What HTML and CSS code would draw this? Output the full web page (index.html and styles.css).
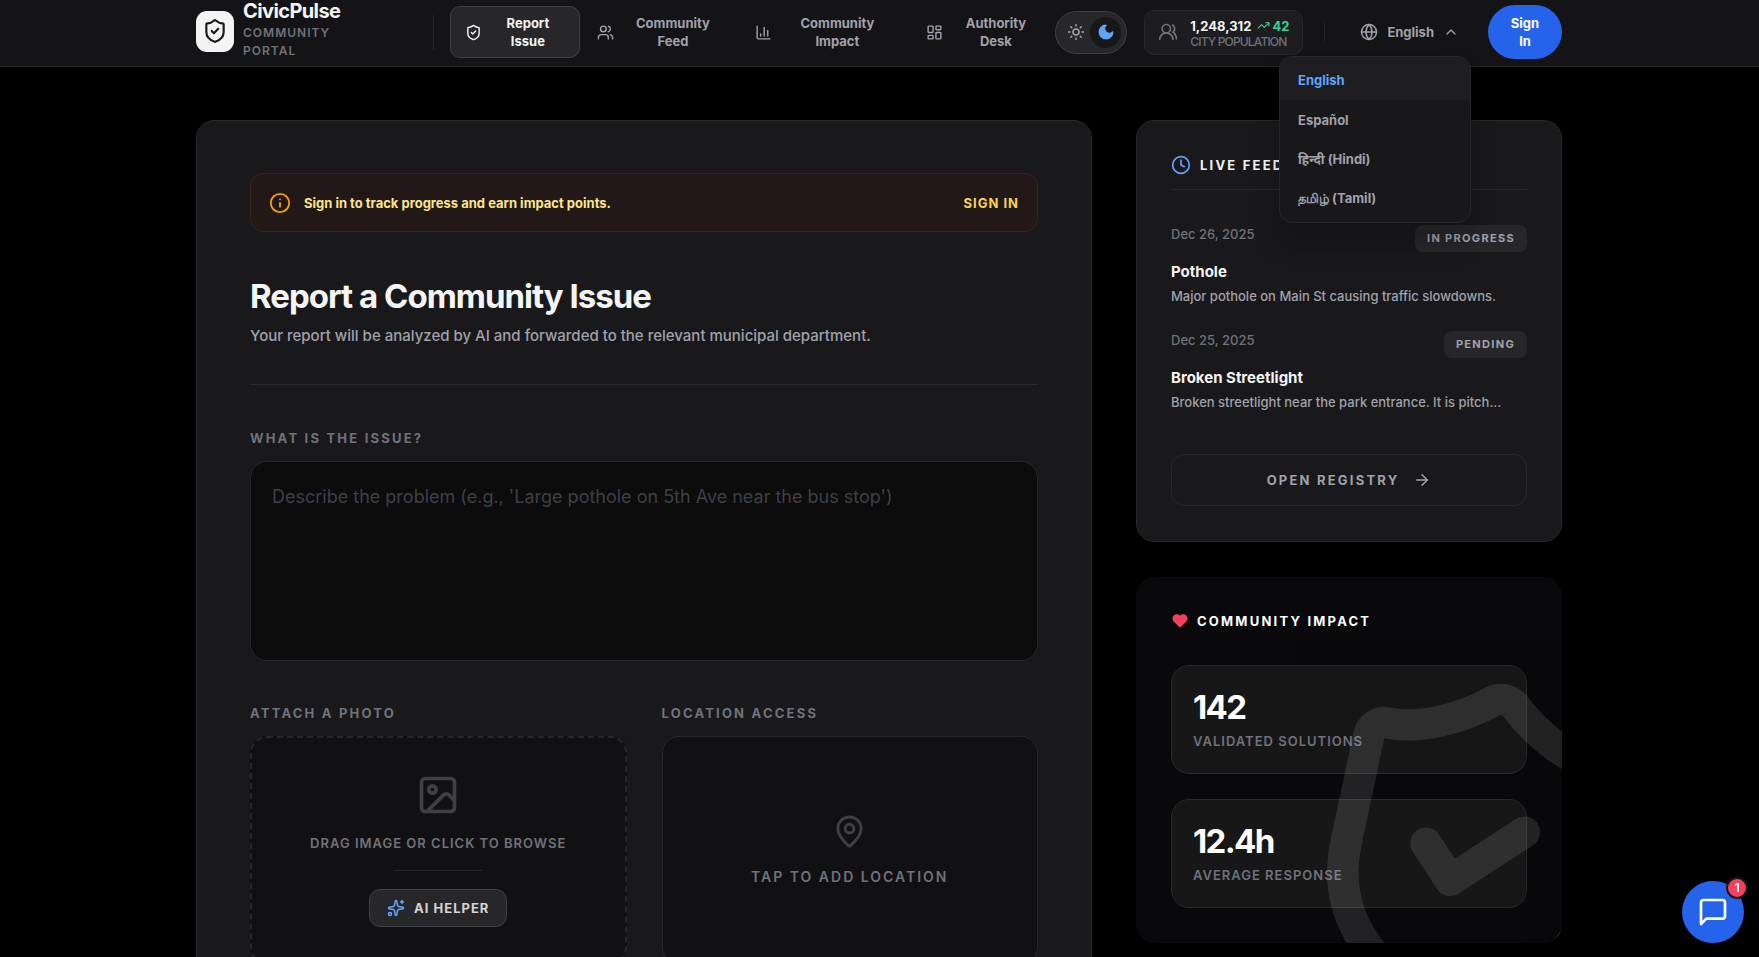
FILE: index.html
```html
<!DOCTYPE html>
<html lang="en">
  <head>
    <meta charset="UTF-8" />
    <meta name="viewport" content="width=device-width, initial-scale=1.0" />
    <title>CivicPulse - Community Portal</title>
    <link rel="stylesheet" href="styles.css">
  </head>
  <body>
    <header class="header">
      <div class="container header-row">
        <a href="#" class="brand">
          <span class="brand-mark">
            <svg class="icon" width="26" height="26" viewBox="0 0 24 24"><path d="M20 13c0 5-3.5 7.5-7.66 8.95a1 1 0 0 1-.67-.01C7.5 20.5 4 18 4 13V6a1 1 0 0 1 1-1c2 0 4.5-1.2 6.24-2.72a1.17 1.17 0 0 1 1.52 0C14.51 3.81 17 5 19 5a1 1 0 0 1 1 1z"/><path d="m9 12 2 2 4-4"/></svg>
          </span>
          <span class="brand-text">
            <span class="brand-name">CivicPulse</span>
            <span class="brand-sub">Community Portal</span>
          </span>
        </a>
        <span class="divider divider-tall"></span>

        <nav class="nav">
          <button type="button" class="nav-item active">
            <svg class="icon" width="17" height="17" viewBox="0 0 24 24"><path d="M20 13c0 5-3.5 7.5-7.66 8.95a1 1 0 0 1-.67-.01C7.5 20.5 4 18 4 13V6a1 1 0 0 1 1-1c2 0 4.5-1.2 6.24-2.72a1.17 1.17 0 0 1 1.52 0C14.51 3.81 17 5 19 5a1 1 0 0 1 1 1z"/><path d="m9 12 2 2 4-4"/></svg>
            <span>Report Issue</span>
          </button>
          <button type="button" class="nav-item">
            <svg class="icon" width="17" height="17" viewBox="0 0 24 24"><path d="M16 21v-2a4 4 0 0 0-4-4H6a4 4 0 0 0-4 4v2"/><circle cx="9" cy="7" r="4"/><path d="M22 21v-2a4 4 0 0 0-3-3.87"/><path d="M16 3.13a4 4 0 0 1 0 7.75"/></svg>
            <span>Community Feed</span>
          </button>
          <button type="button" class="nav-item">
            <svg class="icon" width="17" height="17" viewBox="0 0 24 24"><path d="M3 3v16a2 2 0 0 0 2 2h16"/><path d="M18 17V9"/><path d="M13 17V5"/><path d="M8 17v-3"/></svg>
            <span>Community Impact</span>
          </button>
          <button type="button" class="nav-item">
            <svg class="icon" width="17" height="17" viewBox="0 0 24 24"><rect width="7" height="9" x="3" y="3" rx="1"/><rect width="7" height="5" x="14" y="3" rx="1"/><rect width="7" height="9" x="14" y="12" rx="1"/><rect width="7" height="5" x="3" y="16" rx="1"/></svg>
            <span>Authority Desk</span>
          </button>
        </nav>

        <div class="actions">
          <button type="button" class="theme-toggle" aria-label="Toggle theme">
            <svg class="icon" width="18" height="18" viewBox="0 0 24 24"><circle cx="12" cy="12" r="4"/><path d="M12 2v2"/><path d="M12 20v2"/><path d="m4.93 4.93 1.41 1.41"/><path d="m17.66 17.66 1.41 1.41"/><path d="M2 12h2"/><path d="M20 12h2"/><path d="m6.34 17.66-1.41 1.41"/><path d="m19.07 4.93-1.41 1.41"/></svg>
            <span class="theme-knob">
              <svg class="icon moon" width="18" height="18" viewBox="0 0 24 24"><path d="M12 3a6 6 0 0 0 9 9 9 9 0 1 1-9-9Z"/></svg>
            </span>
          </button>

          <div class="population">
            <svg class="icon" width="20" height="20" viewBox="0 0 24 24"><path d="M18 21a8 8 0 0 0-16 0"/><circle cx="10" cy="8" r="5"/><path d="M22 20c0-3.37-2-6.5-4-8a5 5 0 0 0-.45-8.3"/></svg>
            <div>
              <div class="population-row">
                <span class="population-count">1,248,312</span>
                <span class="population-trend">
                  <svg class="icon" width="13" height="13" viewBox="0 0 24 24"><path d="m22 7-8.5 8.5-5-5L2 17"/><path d="M16 7h6v6"/></svg>42</span>
              </div>
              <div class="population-label">City Population</div>
            </div>
          </div>

          <span class="divider divider-short"></span>

          <div class="language">
            <button type="button" class="language-btn" aria-haspopup="true" aria-expanded="true">
              <svg class="icon" width="18" height="18" viewBox="0 0 24 24"><circle cx="12" cy="12" r="10"/><path d="M12 2a14.5 14.5 0 0 0 0 20 14.5 14.5 0 0 0 0-20"/><path d="M2 12h20"/></svg>
              English
              <svg class="icon" width="16" height="16" viewBox="0 0 24 24"><path d="m18 15-6-6-6 6"/></svg>
            </button>
            <div class="language-menu">
              <button type="button" class="language-option selected">English</button>
              <button type="button" class="language-option" lang="es">Español</button>
              <button type="button" class="language-option">हिन्दी (Hindi)</button>
              <button type="button" class="language-option">தமிழ் (Tamil)</button>
            </div>
          </div>

          <button type="button" class="sign-in">Sign In</button>
        </div>
      </div>
    </header>

    <main class="container layout">
      <form class="card report">
        <div class="alert">
          <svg class="icon" width="22" height="22" viewBox="0 0 24 24"><circle cx="12" cy="12" r="10"/><path d="M12 16v-4"/><path d="M12 8h.01"/></svg>
          <p>Sign in to track progress and earn impact points.</p>
          <a href="#">Sign In</a>
        </div>

        <div class="report-head">
          <h1>Report a Community Issue</h1>
          <p>Your report will be analyzed by AI and forwarded to the relevant municipal department.</p>
        </div>

        <div class="field">
          <label for="issue" class="label">What is the issue?</label>
          <textarea id="issue" class="textarea" placeholder="Describe the problem (e.g., 'Large pothole on 5th Ave near the bus stop')"></textarea>
        </div>

        <div class="field-row">
          <div class="field">
            <span class="label">Attach a photo</span>
            <div class="dropzone">
              <svg class="icon" width="44" height="44" viewBox="0 0 24 24"><rect width="18" height="18" x="3" y="3" rx="2"/><circle cx="9" cy="9" r="2"/><path d="m21 15-3.09-3.09a2 2 0 0 0-2.82 0L6 21"/></svg>
              <span class="dropzone-text">Drag image or click to browse</span>
              <span class="dropzone-line"></span>
              <button type="button" class="ai-helper">
                <svg class="icon" width="18" height="18" viewBox="0 0 24 24"><path d="M11.02 2.81a1 1 0 0 1 1.97 0l1.05 5.56a2 2 0 0 0 1.59 1.59l5.56 1.05a1 1 0 0 1 0 1.97l-5.56 1.05a2 2 0 0 0-1.59 1.59l-1.05 5.56a1 1 0 0 1-1.97 0l-1.05-5.56a2 2 0 0 0-1.59-1.59l-5.56-1.05a1 1 0 0 1 0-1.97l5.56-1.05a2 2 0 0 0 1.59-1.59z"/><path d="M20 2v4"/><path d="M22 4h-4"/><circle cx="4" cy="20" r="2"/></svg>
                AI Helper
              </button>
            </div>
          </div>
          <div class="field">
            <span class="label">Location access</span>
            <button type="button" class="location">
              <svg class="icon" width="35" height="35" viewBox="0 0 24 24"><path d="M20 10c0 4.99-5.54 10.19-7.4 11.8a1 1 0 0 1-1.2 0C9.54 20.19 4 14.99 4 10a8 8 0 0 1 16 0"/><circle cx="12" cy="10" r="3"/></svg>
              Tap to add location
            </button>
          </div>
        </div>
      </form>

      <aside class="sidebar">
        <section class="card feed">
          <h2 class="feed-title">
            <svg class="icon" width="20" height="20" viewBox="0 0 24 24"><circle cx="12" cy="12" r="10"/><path d="M12 6v6l4 2"/></svg>
            Live Feed
          </h2>
          <article class="feed-item">
            <div class="feed-meta">
              <time datetime="2025-12-26">Dec 26, 2025</time>
              <span class="status">In Progress</span>
            </div>
            <h3>Pothole</h3>
            <p>Major pothole on Main St causing traffic slowdowns.</p>
          </article>
          <article class="feed-item">
            <div class="feed-meta">
              <time datetime="2025-12-25">Dec 25, 2025</time>
              <span class="status">Pending</span>
            </div>
            <h3>Broken Streetlight</h3>
            <p>Broken streetlight near the park entrance. It is pitch...</p>
          </article>
          <button type="button" class="registry">
            Open Registry
            <svg class="icon" width="18" height="18" viewBox="0 0 24 24"><path d="M5 12h14"/><path d="m12 5 7 7-7 7"/></svg>
          </button>
        </section>

        <section class="impact">
          <h2 class="impact-title">
            <svg class="heart" width="18" height="18" viewBox="0 0 24 24"><path d="M19 14c1.49-1.46 3-3.21 3-5.5A5.5 5.5 0 0 0 16.5 3c-1.76 0-3 .5-4.5 2-1.5-1.5-2.74-2-4.5-2A5.5 5.5 0 0 0 2 8.5c0 2.3 1.5 4.05 3 5.5l7 7Z"/></svg>
            Community Impact
          </h2>
          <div class="stat">
            <div class="stat-value">142</div>
            <div class="stat-label">Validated Solutions</div>
          </div>
          <div class="stat">
            <div class="stat-value">12.4h</div>
            <div class="stat-label">Average Response</div>
          </div>
          <svg class="icon watermark" width="376" height="376" viewBox="0 0 24 24"><path d="M20 13c0 5-3.5 7.5-7.66 8.95a1 1 0 0 1-.67-.01C7.5 20.5 4 18 4 13V6a1 1 0 0 1 1-1c2 0 4.5-1.2 6.24-2.72a1.17 1.17 0 0 1 1.52 0C14.51 3.81 17 5 19 5a1 1 0 0 1 1 1z"/><path d="m9 12 2 2 4-4"/></svg>
        </section>
      </aside>
    </main>

    <button type="button" class="chat" aria-label="Open chat">
      <svg class="icon" width="32" height="32" viewBox="0 0 24 24"><path d="M21 15a2 2 0 0 1-2 2H7l-4 4V5a2 2 0 0 1 2-2h14a2 2 0 0 1 2 2z"/></svg>
      <span class="chat-badge">1</span>
    </button>
  </body>
</html>
```

FILE: styles.css
```css
*,
*::after,
*::before {
  margin: 0;
  padding: 0;
  box-sizing: border-box;
}

html {
  font-family: "Inter", "Noto Sans", sans-serif;
  scrollbar-width: none;
}

body {
  background: #000;
  color: #f4f4f5;
  font-size: 13px;
  line-height: 18px;
}

button {
  font: inherit;
  color: inherit;
  background: none;
  border: 0;
  cursor: pointer;
}

a {
  color: inherit;
  text-decoration: none;
}

.icon {
  flex-shrink: 0;
  fill: none;
  stroke: currentColor;
  stroke-width: 2;
  stroke-linecap: round;
  stroke-linejoin: round;
}

.container {
  max-width: 1409px;
  margin: 0 auto;
  padding: 0 22px 0 21px;
}

/* Header */
.header {
  position: sticky;
  top: 0;
  z-index: 10;
  background: #141416;
  border-bottom: 1px solid #27272a;
}

.header-row {
  display: flex;
  align-items: center;
  padding-bottom: 2px;
}

.brand {
  display: flex;
  flex: 0 0 221px;
  align-items: center;
  gap: 9px;
}

.brand-mark {
  display: grid;
  place-items: center;
  width: 38px;
  height: 41px;
  margin-top: -2px;
  border-radius: 11px;
  background: #f4f4f5;
  color: #18181b;
}

.brand-text {
  display: flex;
  flex-direction: column;
  width: 110px;
  gap: 2px;
  padding-bottom: 4px;
}

.brand-name {
  font-size: 20px;
  font-weight: 700;
  line-height: 22px;
  letter-spacing: -0.03em;
}

.brand-sub {
  color: #71717a;
  font-size: 12px;
  font-weight: 600;
  letter-spacing: 1px;
  text-transform: uppercase;
}

.divider {
  width: 1px;
  background: #27272a;
}

.divider-tall {
  height: 35px;
  margin: 0 16px;
}

.divider-short {
  height: 18px;
  margin: 0 4px;
}

.nav {
  display: flex;
  flex: 1;
  min-width: 0;
  gap: 2px;
}

.nav-item {
  display: flex;
  align-items: center;
  gap: 9px;
  padding: 7px 14px;
  border: 1px solid transparent;
  border-radius: 10px;
  color: #a1a1aa;
  font-weight: 700;
}

.nav-item.active {
  border-color: #3f3f46;
  background: #27272a;
  color: #f4f4f5;
}

.actions {
  display: flex;
  align-items: center;
  gap: 17px;
}

.theme-toggle {
  display: flex;
  align-items: center;
  gap: 5px;
  padding: 5px 5px 5px 11px;
  border: 1px solid #3f3f46;
  border-radius: 22px;
  background: #27272a;
  color: #a1a1aa;
}

.theme-knob {
  display: grid;
  place-items: center;
  width: 31px;
  height: 31px;
  border-radius: 50%;
  background: #18181b;
}

.moon {
  color: #60a5fa;
  fill: currentColor;
}

.population {
  display: flex;
  align-items: center;
  gap: 12px;
  padding: 6px 13px;
  border: 1px solid #27272a;
  border-radius: 10px;
  background: #1d1d1f;
  color: #71717a;
}

.population-row {
  display: flex;
  align-items: center;
  gap: 6px;
  font-weight: 700;
}

.population-count {
  color: #f4f4f5;
}

.population-trend {
  display: flex;
  align-items: center;
  gap: 2px;
  color: #34d399;
}

.population-label {
  font-size: 12px;
  font-weight: 500;
  line-height: 13px;
  letter-spacing: -0.07em;
  text-transform: uppercase;
}

.language {
  position: relative;
}

.language-btn {
  display: flex;
  align-items: center;
  gap: 9px;
  padding: 10px 12px 10px 14px;
  color: #a1a1aa;
  font-weight: 700;
}

.language-menu {
  position: absolute;
  top: 43px;
  right: 0;
  width: 192px;
  padding-bottom: 5px;
  overflow: hidden;
  border: 1px solid #27272a;
  border-radius: 13px;
  background: #18181a;
  box-shadow: 0 20px 25px rgba(0, 0, 0, 0.2);
}

.language-option {
  display: block;
  width: 100%;
  height: 39px;
  padding: 0 18px;
  color: #a1a1aa;
  font-weight: 700;
  text-align: left;
}

.language-option.selected {
  height: 43px;
  padding-top: 3px;
  background: #1e1e20;
  color: #60a5fa;
}

.sign-in {
  width: 74px;
  padding: 9px 16px;
  border-radius: 27px;
  background: #2563eb;
  color: #fff;
  font-weight: 700;
}

/* Page */
.layout {
  display: grid;
  grid-template-columns: repeat(12, 1fr);
  column-gap: 44px;
  align-items: start;
  padding-top: 53px;
  padding-bottom: 53px;
}

.card {
  border: 1px solid #27272a;
  border-radius: 18px;
  background: #19191b;
}

.report {
  grid-column: span 8;
  padding: 52px 53px;
}

.alert {
  display: flex;
  align-items: center;
  gap: 13px;
  min-height: 59px;
  padding: 0 18px;
  border: 1px solid #3d2117;
  border-radius: 13px;
  background: #221817;
  color: #f59e0b;
}

.alert p {
  flex: 1;
  color: #fde68a;
  font-weight: 700;
}

.alert a {
  color: #fcd34d;
  font-weight: 700;
  letter-spacing: 1px;
  text-transform: uppercase;
}

.report-head {
  margin: 44px 0;
  padding-bottom: 36px;
  border-bottom: 1px solid #27272a;
}

.report-head h1 {
  font-size: 33px;
  font-weight: 700;
  line-height: 40px;
  letter-spacing: -0.03em;
}

.report-head p {
  margin-top: 8px;
  color: #a1a1aa;
  font-size: 15px;
  font-weight: 500;
  line-height: 24px;
}

.field {
  display: flex;
  flex-direction: column;
  gap: 14px;
}

.label {
  color: #71717a;
  font-weight: 700;
  letter-spacing: 0.17em;
  text-transform: uppercase;
}

.textarea {
  height: 200px;
  padding: 21px;
  border: 1px solid #27272a;
  border-radius: 17px;
  outline: none;
  resize: none;
  background: #0c0c0d;
  color: #f4f4f5;
  font-family: inherit;
  font-size: 18px;
  line-height: 28px;
}

.textarea::placeholder {
  color: #3f3f46;
}

.field-row {
  display: grid;
  grid-template-columns: 1fr 1fr;
  gap: 35px;
  margin-top: 43px;
}

.dropzone,
.location {
  display: flex;
  flex-direction: column;
  align-items: center;
  justify-content: center;
  height: 228px;
  border: 1px solid #27272a;
  border-radius: 17px;
  background: #111113;
  color: #3f3f46;
}

.dropzone {
  border: 2px dashed #27272a;
}

.dropzone-text {
  margin: 17px 0 18px;
  color: #71717a;
  font-weight: 600;
  letter-spacing: 1px;
  text-transform: uppercase;
}

.dropzone-line {
  width: 88px;
  height: 1px;
  margin-bottom: 18px;
  background: #27272a;
}

.ai-helper {
  display: flex;
  align-items: center;
  gap: 9px;
  padding: 9px 17px;
  border: 1px solid #3f3f46;
  border-radius: 11px;
  background: #27272a;
  color: #d4d4d8;
  font-weight: 700;
  letter-spacing: 1px;
  text-transform: uppercase;
}

.ai-helper .icon {
  color: #60a5fa;
}

.location {
  gap: 19px;
  font-size: 14px;
  font-weight: 600;
  letter-spacing: 2px;
  text-transform: uppercase;
  color: #71717a;
}

.location .icon {
  color: #3f3f46;
}

/* Sidebar */
.sidebar {
  grid-column: span 4;
  display: flex;
  flex-direction: column;
  gap: 35px;
}

.feed {
  padding: 34px 34px 35px;
}

.feed-title,
.impact-title {
  display: flex;
  align-items: center;
  gap: 8px;
  font-size: 13px;
  font-weight: 700;
  letter-spacing: 0.17em;
  text-transform: uppercase;
}

.feed-title {
  gap: 9px;
  margin-bottom: 35px;
  padding-bottom: 14px;
  border-bottom: 1px solid #27272a;
}

.feed-title .icon {
  color: #60a5fa;
}

.feed-item {
  margin-bottom: 25px;
}

.feed-meta {
  display: flex;
  align-items: flex-start;
  justify-content: space-between;
  margin-bottom: 9px;
  color: #71717a;
  font-weight: 500;
}

.status {
  padding: 5px 12px;
  border-radius: 8px;
  background: #27272a;
  color: #a1a1aa;
  font-size: 11px;
  font-weight: 700;
  line-height: 17px;
  letter-spacing: 0.12em;
  text-transform: uppercase;
}

.feed-item h3 {
  font-size: 15px;
  font-weight: 700;
  line-height: 22px;
}

.feed-item p {
  margin-top: 3px;
  overflow: hidden;
  color: #a1a1aa;
  font-weight: 500;
  line-height: 20px;
  white-space: nowrap;
  text-overflow: ellipsis;
}

.registry {
  display: flex;
  align-items: center;
  justify-content: center;
  gap: 14px;
  width: 100%;
  height: 52px;
  margin-top: 42px;
  border: 1px solid #27272a;
  border-radius: 13px;
  color: #a1a1aa;
  font-weight: 700;
  letter-spacing: 0.17em;
  text-transform: uppercase;
}

.impact {
  position: relative;
  display: flex;
  flex-direction: column;
  gap: 25px;
  padding: 35px;
  overflow: hidden;
  border-radius: 18px;
  background: #09090b;
}

.impact-title {
  margin-bottom: 10px;
  color: #fff;
}

.heart {
  fill: #f43f5e;
}

.stat {
  padding: 21px 21px 23px;
  border: 1px solid #2a2a2c;
  border-radius: 18px;
  background: #171717;
}

.stat-value {
  color: #fff;
  font-size: 33px;
  font-weight: 700;
  line-height: 40px;
  letter-spacing: -0.05em;
}

.stat-label {
  margin-top: 5px;
  color: #71717a;
  font-weight: 600;
  letter-spacing: 1px;
  text-transform: uppercase;
}

.watermark {
  position: absolute;
  right: -98px;
  bottom: -98px;
  color: #fff;
  opacity: 0.1;
  transform: rotate(12deg);
}

/* Chat bubble */
.chat {
  position: fixed;
  right: 15px;
  bottom: 14px;
  display: grid;
  place-items: center;
  width: 62px;
  height: 62px;
  border-radius: 50%;
  background: #2563eb;
  color: #fff;
}

.chat-badge {
  position: absolute;
  top: -4px;
  right: -4px;
  width: 22px;
  height: 22px;
  border: 2px solid #18181b;
  border-radius: 50%;
  background: #f43f5e;
  font-size: 12px;
  font-weight: 700;
  line-height: 18px;
}
```
